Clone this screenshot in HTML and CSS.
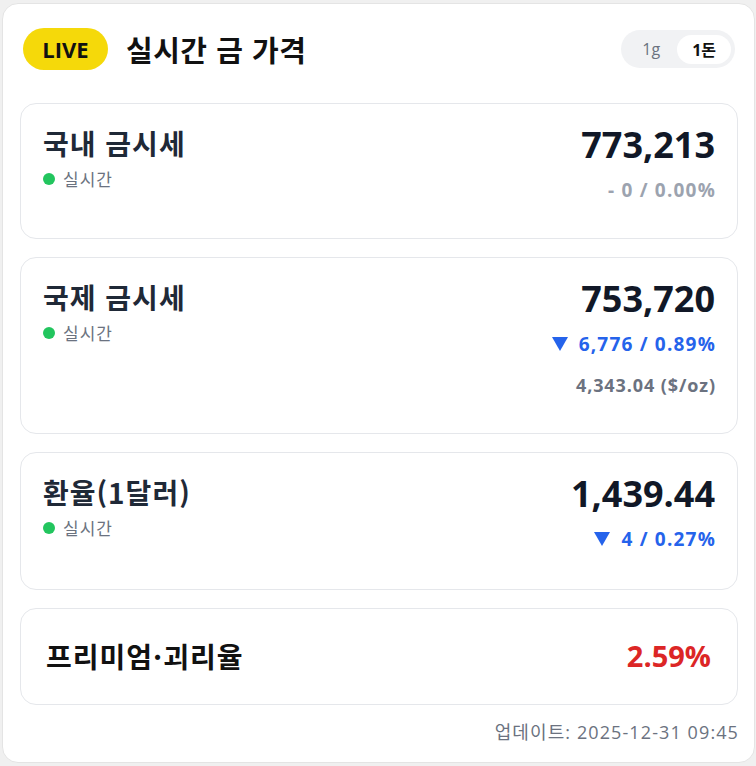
FILE: index.html
```html
<!DOCTYPE html>
<html lang="ko">
<head>
<meta charset="utf-8">
<title>실시간 금 가격</title>
<link rel="stylesheet" href="styles.css">
</head>
<body>
<div class="panel">
  <div class="header">
    <div class="header-left">
      <span class="live">LIVE</span>
      <h1 class="title">실시간 금 가격</h1>
    </div>
    <div class="toggle">
      <span class="opt">1g</span>
      <span class="opt active">1돈</span>
    </div>
  </div>

  <div class="card">
    <div class="left">
      <div class="name">국내 금시세</div>
      <div class="status"><span class="dot"></span>실시간</div>
    </div>
    <div class="right">
      <div class="value">773,213</div>
      <div class="change flat">- 0 / 0.00%</div>
    </div>
  </div>

  <div class="card">
    <div class="left">
      <div class="name">국제 금시세</div>
      <div class="status"><span class="dot"></span>실시간</div>
    </div>
    <div class="right">
      <div class="value">753,720</div>
      <div class="change down"><span class="tri"></span>6,776 / 0.89%</div>
      <div class="extra">4,343.04 ($/oz)</div>
    </div>
  </div>

  <div class="card tall">
    <div class="left">
      <div class="name">환율(1달러)</div>
      <div class="status"><span class="dot"></span>실시간</div>
    </div>
    <div class="right">
      <div class="value">1,439.44</div>
      <div class="change down"><span class="tri"></span>4 / 0.27%</div>
    </div>
  </div>

  <div class="card premium">
    <div class="name">프리미엄·괴리율</div>
    <div class="pct">2.59%</div>
  </div>

  <div class="footer">업데이트: 2025-12-31 09:45</div>
</div>
</body>
</html>
```

FILE: styles.css
```css
* { box-sizing: border-box; }
html, body { margin: 0; padding: 0; }
body {
  background: #f0f0f0;
  font-family: "Open Sans", "Noto Sans CJK KR", sans-serif;
  color: #111827;
}
.panel {
  margin: 3px 1px 3px 2px;
  height: 760px;
  background: #ffffff;
  border: 1px solid #e4e4e4;
  border-radius: 16px;
  padding: 24px 16px 0 17px;
}
.header {
  display: flex;
  align-items: center;
  justify-content: space-between;
  height: 42px;
  margin-bottom: 33px;
  padding: 0 3px 0 3px;
}
.header-left {
  display: flex;
  align-items: center;
  gap: 18px;
}
.live {
  display: inline-flex;
  align-items: center;
  justify-content: center;
  width: 85px;
  height: 42px;
  border-radius: 21px;
  background: #f5d90a;
  color: #111111;
  font-family: "Open Sans", sans-serif;
  font-weight: 700;
  font-size: 22px;
}
.title {
  margin: 0;
  font-family: "Noto Sans CJK KR", sans-serif;
  font-weight: 700;
  font-size: 29px;
  line-height: 36px;
  color: #111111;
  letter-spacing: 0.5px;
}
.toggle {
  display: flex;
  align-items: center;
  height: 38px;
  padding: 0 4px;
  background: #f1f2f4;
  border-radius: 19px;
}
.opt {
  display: inline-flex;
  align-items: center;
  justify-content: center;
  height: 29px;
  padding: 0 17px;
  border-radius: 15px;
  font-family: "Open Sans", "Noto Sans CJK KR", sans-serif;
  font-size: 16px;
  color: #6b7280;
}
.opt.active {
  background: #ffffff;
  color: #111111;
  font-weight: 700;
  padding: 0 15px;
}
.card {
  display: flex;
  justify-content: space-between;
  align-items: flex-start;
  border: 1px solid #e5e7eb;
  border-radius: 16px;
  padding: 19px 22px 34px 22px;
  margin-bottom: 18px;
}
.card.tall { padding-top: 19px; padding-bottom: 36px; }
.name {
  font-family: "Noto Sans CJK KR", sans-serif;
  font-weight: 700;
  font-size: 28px;
  line-height: 40px;
  color: #1f2937;
  letter-spacing: 1px;
}
.status {
  display: flex;
  align-items: center;
  gap: 8px;
  margin-top: 5px;
  font-family: "Noto Sans CJK KR", sans-serif;
  font-size: 17px;
  line-height: 22px;
  color: #6b7280;
  letter-spacing: 1px;
}
.dot {
  width: 12px;
  height: 12px;
  border-radius: 50%;
  background: #22c55e;
}
.right {
  display: flex;
  flex-direction: column;
  align-items: flex-end;
}
.value {
  font-weight: 700;
  font-size: 36px;
  line-height: 44px;
  color: #111827;
}
.change {
  display: flex;
  align-items: center;
  margin-top: 9px;
  margin-right: -1px;
  font-weight: 700;
  font-size: 19px;
  line-height: 28px;
  letter-spacing: 1.2px;
}
.change.flat { color: #9ca3af; }
.change.down { color: #2563eb; }
.tri {
  width: 0;
  height: 0;
  border-left: 8px solid transparent;
  border-right: 8px solid transparent;
  border-top: 14px solid #2563eb;
  margin-right: 11px;
}
.extra {
  margin-top: 14px;
  margin-right: -1px;
  font-weight: 700;
  font-size: 18px;
  line-height: 27px;
  color: #6b7280;
  letter-spacing: 0.9px;
}
.premium {
  align-items: center;
  padding: 25px 26px 26px 25px;
}
.premium .name { line-height: 44px; color: #111111; }
.pct {
  font-weight: 700;
  font-size: 29px;
  line-height: 40px;
  color: #dc2626;
}
.footer {
  margin-top: -5px;
  text-align: right;
  margin-right: -1px;
  font-family: "Open Sans", "Noto Sans CJK KR", sans-serif;
  font-size: 18px;
  line-height: 28px;
  color: #6b7280;
  letter-spacing: 1.1px;
}
```
